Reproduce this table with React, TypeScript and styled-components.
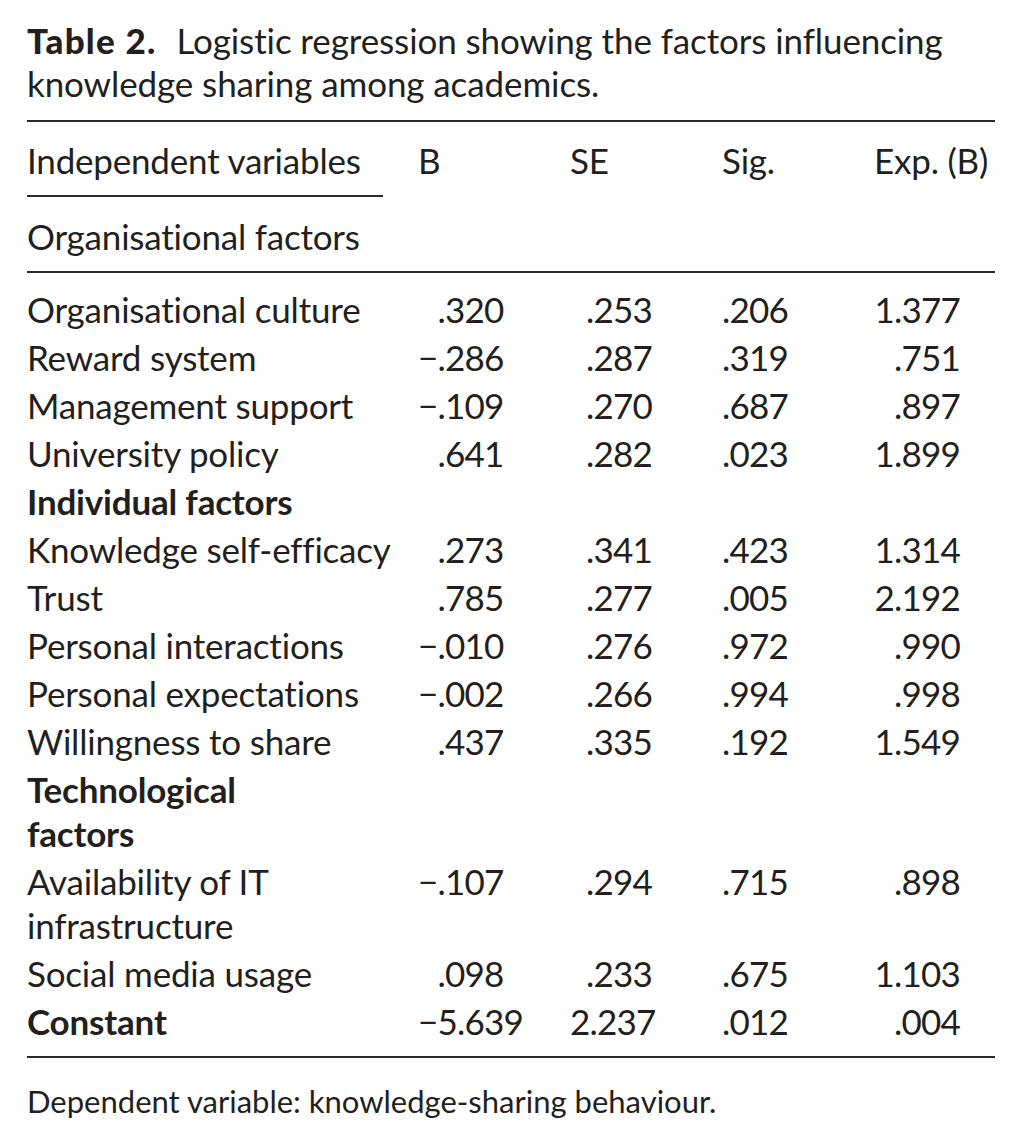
import React from "react";
import styled, { createGlobalStyle } from "styled-components";

const Global = createGlobalStyle`
  html, body { margin: 0; padding: 0; background: #ffffff; }
  body { font-family: Lato, "Open Sans", "Noto Sans", sans-serif; color: #231f20; }
`;

const Page = styled.div`
  padding: 19px 26px 40px 27px;
  width: 968px;
`;

const Caption = styled.div`
  display: flex;
  flex-direction: column;
  font-size: 35px;
  line-height: 43px;
  letter-spacing: -0.1px;
`;

const CaptionLine = styled.div`
  white-space: nowrap;
`;

const Strong = styled.span`
  font-weight: 900;
  letter-spacing: 1.2px;
  margin-right: 20px;
`;

const Rule = styled.div<{ $width?: number; $top: number; $bottom: number }>`
  height: 2px;
  background: #2b2b2b;
  width: ${(p) => (p.$width ? `${p.$width}px` : "100%")};
  margin-top: ${(p) => p.$top}px;
  margin-bottom: ${(p) => p.$bottom}px;
`;

const Grid = styled.div`
  display: grid;
  grid-template-columns: 391px 152px 152px 152px 121px;
  font-size: 35px;
  line-height: 44px;
  letter-spacing: -0.2px;
  font-variant-numeric: tabular-nums;
`;

const Label = styled.div<{ $bold?: boolean; $span?: boolean }>`
  padding: 2px 0;
  font-weight: ${(p) => (p.$bold ? 700 : 400)};
  white-space: nowrap;
  grid-column: ${(p) => (p.$span ? "1 / -1" : "auto")};
`;

const Head = styled.div`
  padding: 2px 0;
  white-space: nowrap;
`;

const Value = styled.div<{ $align: "left" | "right"; $pad: number }>`
  padding: 2px ${(p) => (p.$align === "right" ? p.$pad : 0)}px 2px
    ${(p) => (p.$align === "left" ? p.$pad : 0)}px;
  text-align: ${(p) => p.$align};
  white-space: nowrap;
  letter-spacing: -0.8px;
`;

const Sign = styled.span<{ $hidden: boolean }>`
  visibility: ${(p) => (p.$hidden ? "hidden" : "visible")};
`;

const Footnote = styled.p`
  margin: 0;
  font-size: 31px;
  line-height: 40px;
  letter-spacing: 0px;
`;

type Row = {
  label: React.ReactNode;
  bold?: boolean;
  values?: [string, string, string, string];
};

const rows: Row[] = [
  { label: "Organisational culture", values: [".320", ".253", ".206", "1.377"] },
  { label: "Reward system", values: ["−.286", ".287", ".319", ".751"] },
  { label: "Management support", values: ["−.109", ".270", ".687", ".897"] },
  { label: "University policy", values: [".641", ".282", ".023", "1.899"] },
  { label: "Individual factors", bold: true },
  { label: "Knowledge self-efficacy", values: [".273", ".341", ".423", "1.314"] },
  { label: "Trust", values: [".785", ".277", ".005", "2.192"] },
  { label: "Personal interactions", values: ["−.010", ".276", ".972", ".990"] },
  { label: "Personal expectations", values: ["−.002", ".266", ".994", ".998"] },
  { label: "Willingness to share", values: [".437", ".335", ".192", "1.549"] },
  {
    label: (
      <>
        Technological
        <br />
        factors
      </>
    ),
    bold: true,
  },
  {
    label: (
      <>
        Availability of IT
        <br />
        infrastructure
      </>
    ),
    values: ["−.107", ".294", ".715", ".898"],
  },
  { label: "Social media usage", values: [".098", ".233", ".675", "1.103"] },
  { label: "Constant", bold: true, values: ["−5.639", "2.237", ".012", ".004"] },
];

function Signed({ v }: { v: string }) {
  const neg = v.startsWith("−");
  return (
    <>
      <Sign $hidden={!neg}>−</Sign>
      {neg ? v.slice(1) : v}
    </>
  );
}

export default function App() {
  return (
    <>
      <Global />
      <Page>
        <Caption>
          <CaptionLine>
            <Strong>Table 2.</Strong>
            <span>Logistic regression showing the factors influencing</span>
          </CaptionLine>
          <CaptionLine>knowledge sharing among academics.</CaptionLine>
        </Caption>
        <Rule $top={15} $bottom={14} />
        <Grid>
          <Head>Independent variables</Head>
          <Head>B</Head>
          <Head>SE</Head>
          <Head>Sig.</Head>
          <Head>Exp. (B)</Head>
        </Grid>
        <Rule $width={356} $top={11} $bottom={15} />
        <Grid>
          <Label>Organisational factors</Label>
        </Grid>
        <Rule $top={11} $bottom={12} />
        <Grid>
          {rows.map((r, i) => (
            <React.Fragment key={i}>
              <Label $bold={r.bold} $span={!r.values}>
                {r.label}
              </Label>
              {r.values && (
                <>
                  <Value $align="left" $pad={0}>
                    <Signed v={r.values[0]} />
                  </Value>
                  <Value $align="right" $pad={70}>{r.values[1]}</Value>
                  <Value $align="left" $pad={0}>{r.values[2]}</Value>
                  <Value $align="right" $pad={35}>{r.values[3]}</Value>
                </>
              )}
            </React.Fragment>
          ))}
        </Grid>
        <Rule $top={11} $bottom={23} />
        <Footnote>Dependent variable: knowledge-sharing behaviour.</Footnote>
      </Page>
    </>
  );
}
